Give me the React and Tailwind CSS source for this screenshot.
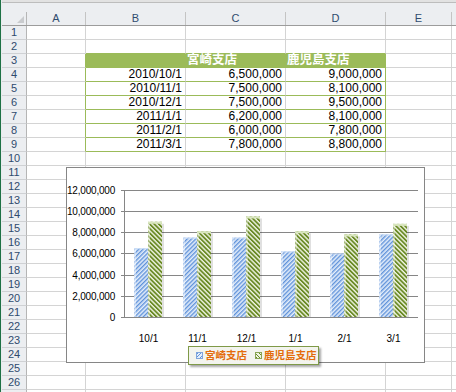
import React from "react";

const dates = ["2010/10/1", "2010/11/1", "2010/12/1", "2011/1/1", "2011/2/1", "2011/3/1"];
const miyazaki = [6500000, 7500000, 7500000, 6200000, 6000000, 7800000];
const kagoshima = [9000000, 8100000, 9500000, 8100000, 7800000, 8800000];
const months = ["10/1", "11/1", "12/1", "1/1", "2/1", "3/1"];
const yLabels = ["12,000,000", "10,000,000", "8,000,000", "6,000,000", "4,000,000", "2,000,000", "0"];

const fmt = (n) => n.toLocaleString("en-US");

// plot geometry (svg coords)
const BASE = 137;
const SCALE = 127 / 12000000;

const Chart = () => (
  <div className="absolute left-[66px] top-[167px] w-[359px] h-[196px] border border-[#868686] bg-white flex flex-col">
    <div className="flex mt-[12px]">
      <div className="w-[49px] flex flex-col text-[10px] tracking-[-0.2px] text-black">
        {yLabels.map((l) => (
          <div key={l} className="h-[21.1667px] leading-[21.1667px] text-right pr-[1px]">
            {l}
          </div>
        ))}
      </div>
      <svg width="302" height="140" className="block ml-[2px]">
        <defs>
          <pattern id="blueHatch" width="3" height="3" patternUnits="userSpaceOnUse" patternTransform="rotate(45)">
            <rect width="3" height="3" fill="#e4eefb" />
            <rect width="1.4" height="3" fill="#5f92da" />
          </pattern>
          <pattern id="greenHatch" width="3.2" height="3.2" patternUnits="userSpaceOnUse" patternTransform="rotate(-45)">
            <rect width="3.2" height="3.2" fill="#eff4e2" />
            <rect width="1.8" height="3.2" fill="#6a8a25" />
          </pattern>
        </defs>
        {[1, 2, 3, 4, 5, 6].map((k) => (
          <line
            key={k}
            x1="3"
            x2="300"
            y1={BASE - k * 21.1667 + 0.5}
            y2={BASE - k * 21.1667 + 0.5}
            stroke="#868686"
            shapeRendering="crispEdges"
          />
        ))}
        {months.map((m, i) => {
          const cx = 30 + 49 * i;
          const hb = miyazaki[i] * SCALE;
          const hg = kagoshima[i] * SCALE;
          return (
            <g key={m}>
              <rect x={cx + 14} y={BASE - hg + 2} width="2" height={hg - 2} fill="#000" opacity="0.12" />
              <rect x={cx - 14} y={BASE - hb} width="14" height={hb} fill="url(#blueHatch)" />
              <rect x={cx - 14} y={BASE - hb} width="2" height={hb} fill="#fff" opacity="0.45" />
              <rect x={cx - 14} y={BASE - hb} width="14" height="1" fill="#cfe0f7" />
              <rect x={cx} y={BASE - hg} width="14" height={hg} fill="url(#greenHatch)" />
              <rect x={cx} y={BASE - hg} width="2" height={hg} fill="#fff" opacity="0.4" />
              <rect x={cx} y={BASE - hg} width="14" height="2" fill="#d9e6bf" />
            </g>
          );
        })}
        <line x1="3" x2="300" y1={BASE + 0.5} y2={BASE + 0.5} stroke="#868686" shapeRendering="crispEdges" />
        <line x1="6.5" x2="6.5" y1="10" y2={BASE + 1} stroke="#868686" shapeRendering="crispEdges" />
      </svg>
    </div>
    <div className="flex ml-[57px] mt-[4px] text-[10px] leading-[14px] text-black">
      {months.map((m) => (
        <div key={m} className="w-[49px] text-center">
          {m}
        </div>
      ))}
    </div>
    <div className="ml-[121px] w-[131px] h-[19px] border border-[#7f9a48] bg-[#f3f4ee] shadow-[2px_2px_2px_rgba(0,0,0,0.35)] flex items-center pl-[7px] text-[10.5px] font-bold text-[#e46c0a] leading-[17px]">
      <span className="w-[7px] h-[7px] border border-[#7fa5dc] bg-[repeating-linear-gradient(135deg,#5f92da_0_1px,#e4eefb_1px_2.5px)]" />
      <span className="ml-[2px]">宮崎支店</span>
      <span className="ml-[8px] w-[7px] h-[7px] border border-[#8aa555] bg-[repeating-linear-gradient(45deg,#6a8a25_0_1px,#eff4e2_1px_2.5px)]" />
      <span className="ml-[2px]">鹿児島支店</span>
    </div>
  </div>
);

export default function App() {
  const rows = Array.from({ length: 27 }, (_, i) => i + 1);

  return (
    <div className="relative w-[456px] h-[392px] overflow-hidden bg-white flex font-['Liberation_Sans','Noto_Sans_CJK_JP',sans-serif]">
      <div className="w-[2px] border-l border-[#1e7145] bg-[#e9ebee]" />
      <div className="flex-1 flex flex-col overflow-hidden">
        <div className="h-[3px] shrink-0 bg-[#e2e2e2] border-b border-[#bdbdbd]" />
        <div className="h-[9px] shrink-0 bg-[#eceef1]" />
        <div className="h-[14px] flex bg-[#eceef1] border-b border-[#9c9c9c] text-[11px] leading-[13px] text-[#2f4b6e] shrink-0">
          <div className="w-[25px] border-r border-[#b5b5b5] relative">
            <div className="absolute right-[2px] bottom-[2px] w-0 h-0 border-l-[7px] border-l-transparent border-b-[7px] border-b-[#c9cbce]" />
          </div>
          <div className="w-[59px] border-r border-[#c4c4c4] text-center">A</div>
          <div className="w-[100px] border-r border-[#c4c4c4] text-center">B</div>
          <div className="w-[100px] border-r border-[#c4c4c4] text-center">C</div>
          <div className="w-[100px] border-r border-[#c4c4c4] text-center">D</div>
          <div className="w-[66px] border-r border-[#c4c4c4] text-center">E</div>
          <div className="flex-1" />
        </div>
        {rows.map((r) => {
          const d = r - 4;
          const isData = d >= 0 && d < 6;
          const isHead = r === 3;
          const inTable = isHead || isData;
          return (
            <div key={r} className="h-[14px] flex shrink-0 text-[12px] leading-[13px] text-black">
              <div className="w-[25px] bg-[#eceef1] border-r border-b border-r-[#b5b5b5] border-b-[#cfd1d4] text-center text-[11px] text-[#2f4b6e]">
                {r <= 26 ? r : ""}
              </div>
              <div className={inTable ? "w-[59px] border-r border-b border-r-[#9bbb59] border-b-[#d4d4d4]" : "w-[59px] border-r border-b border-[#d4d4d4]"} />
              {isHead ? (
                <>
                  <div className="w-[100px] bg-[#9bbb59] border-r border-b border-[#9bbb59]" />
                  <div className="w-[100px] bg-[#9bbb59] border-r border-b border-[#9bbb59] pl-[1px] text-white font-bold text-[12.5px]">
                    宮崎支店
                  </div>
                  <div className="w-[100px] bg-[#9bbb59] border-r border-b border-[#9bbb59] pl-[1px] text-white font-bold text-[12.5px]">
                    鹿児島支店
                  </div>
                </>
              ) : isData ? (
                <>
                  <div className="w-[100px] border-r border-b border-r-[#d4d4d4] border-b-[#9bbb59] text-right pr-[3px]">{dates[d]}</div>
                  <div className="w-[100px] border-r border-b border-r-[#d4d4d4] border-b-[#9bbb59] text-right pr-[3px]">{fmt(miyazaki[d])}</div>
                  <div className="w-[100px] border-r border-b border-[#9bbb59] text-right pr-[3px]">{fmt(kagoshima[d])}</div>
                </>
              ) : (
                <>
                  <div className={r === 2 ? "w-[100px] border-r border-b border-r-[#d4d4d4] border-b-[#9bbb59]" : "w-[100px] border-r border-b border-[#d4d4d4]"} />
                  <div className={r === 2 ? "w-[100px] border-r border-b border-r-[#d4d4d4] border-b-[#9bbb59]" : "w-[100px] border-r border-b border-[#d4d4d4]"} />
                  <div className={r === 2 ? "w-[100px] border-r border-b border-r-[#d4d4d4] border-b-[#9bbb59]" : "w-[100px] border-r border-b border-[#d4d4d4]"} />
                </>
              )}
              <div className="w-[66px] border-r border-b border-[#d4d4d4]" />
              <div className="flex-1 border-b border-[#d4d4d4]" />
            </div>
          );
        })}
      </div>
      <Chart />
    </div>
  );
}
